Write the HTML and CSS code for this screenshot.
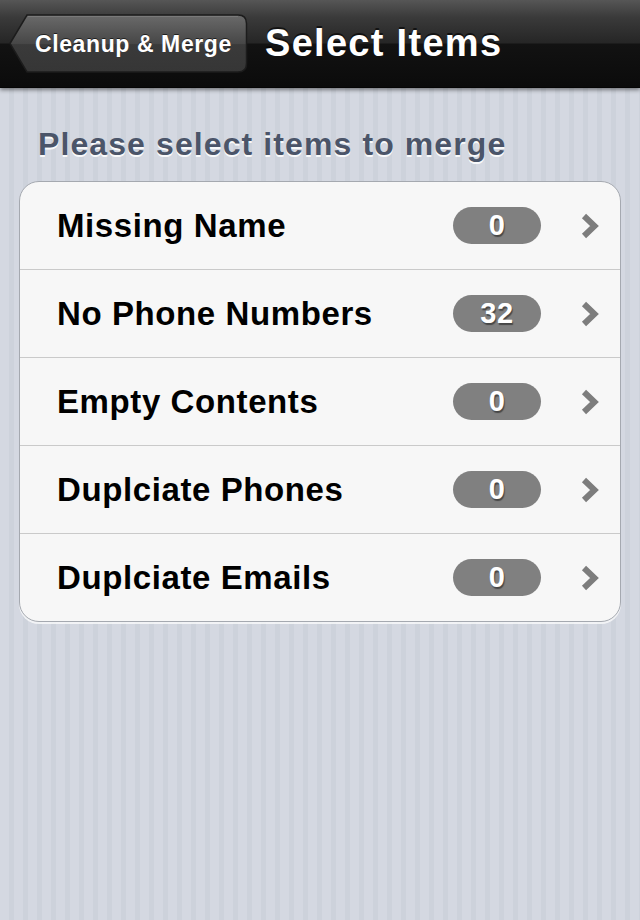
FILE: index.html
```html
<!DOCTYPE html>
<html>
<head>
<meta charset="utf-8">
<link rel="stylesheet" href="styles.css">
</head>
<body>
<div class="screen">
  <header class="navbar">
    <div class="back">
      <svg class="back-bg" width="239" height="60" viewBox="0 0 239 60">
        <defs>
          <linearGradient id="bg" x1="0" y1="0" x2="0" y2="1">
            <stop offset="0" stop-color="#6a6a6a"/>
            <stop offset="0.5" stop-color="#474747"/>
            <stop offset="0.52" stop-color="#3a3a3a"/>
            <stop offset="1" stop-color="#363636"/>
          </linearGradient>
        </defs>
        <path d="M1,29.5 L18,1 H229 Q237.5,1 237.5,9.5 V49.5 Q237.5,58 229,58 H18 Z" fill="url(#bg)" stroke="#1c1c1c" stroke-width="1.5"/>
        <path d="M19,2.5 H229" stroke="#7a7a7a" stroke-width="1" fill="none"/>
      </svg>
      <span class="back-text">Cleanup &amp; Merge</span>
    </div>
    <h1 class="title">Select Items</h1>
  </header>
  <main class="content">
    <h2 class="section-title">Please select items to merge</h2>
    <ul class="table">
      <li class="row"><span class="label">Missing Name</span><span class="badge">0</span><span class="chev"><svg width="18" height="26" viewBox="0 0 18 26"><path d="M3,3 L13.5,13 L3,23" fill="none" stroke="#7d7d7d" stroke-width="6"/></svg></span></li>
      <li class="row"><span class="label">No Phone Numbers</span><span class="badge">32</span><span class="chev"><svg width="18" height="26" viewBox="0 0 18 26"><path d="M3,3 L13.5,13 L3,23" fill="none" stroke="#7d7d7d" stroke-width="6"/></svg></span></li>
      <li class="row"><span class="label">Empty Contents</span><span class="badge">0</span><span class="chev"><svg width="18" height="26" viewBox="0 0 18 26"><path d="M3,3 L13.5,13 L3,23" fill="none" stroke="#7d7d7d" stroke-width="6"/></svg></span></li>
      <li class="row"><span class="label">Duplciate Phones</span><span class="badge">0</span><span class="chev"><svg width="18" height="26" viewBox="0 0 18 26"><path d="M3,3 L13.5,13 L3,23" fill="none" stroke="#7d7d7d" stroke-width="6"/></svg></span></li>
      <li class="row"><span class="label">Duplciate Emails</span><span class="badge">0</span><span class="chev"><svg width="18" height="26" viewBox="0 0 18 26"><path d="M3,3 L13.5,13 L3,23" fill="none" stroke="#7d7d7d" stroke-width="6"/></svg></span></li>
    </ul>
  </main>
</div>
</body>
</html>
```

FILE: styles.css
```css
html, body {
  margin: 0;
  padding: 0;
}
body {
  width: 640px;
  height: 920px;
  overflow: hidden;
  font-family: "Liberation Sans", Arial, sans-serif;
  background: repeating-linear-gradient(90deg, #d4d8e1 0 9px, #cdd2db 9px 14px);
}
.screen {
  display: flex;
  flex-direction: column;
  height: 920px;
}
.navbar {
  position: relative;
  z-index: 1;
  height: 88px;
  box-sizing: border-box;
  display: flex;
  align-items: center;
  padding-left: 9px;
  gap: 17px;
  background: linear-gradient(#565656 0, #3a3a3a 20%, #262626 49%, #121212 51%, #0b0b0b 100%);
  border-bottom: 1px solid #050505;
  box-shadow: 0 2px 4px rgba(0, 0, 0, 0.45);
}
.back {
  position: relative;
  width: 239px;
  height: 60px;
  display: flex;
  align-items: center;
  margin-top: 1px;
}
.back-bg {
  position: absolute;
  left: 0;
  top: 0;
}
.back-text {
  position: relative;
  padding-left: 26px;
  color: #fff;
  font-weight: bold;
  font-size: 23px;
  letter-spacing: 0.6px;
  text-shadow: 0 -1px 0 rgba(0, 0, 0, 0.6);
  white-space: nowrap;
}
.title {
  margin: 0;
  color: #fff;
  font-size: 38px;
  font-weight: bold;
  letter-spacing: 1.3px;
  text-shadow: 0 -2px 0 rgba(0, 0, 0, 0.6);
  white-space: nowrap;
}
.content {
  padding: 0 19px;
}
.section-title {
  margin: 36px 0 0 19px;
  height: 57px;
  font-size: 32px;
  font-weight: bold;
  letter-spacing: 1.1px;
  color: #4b5569;
  text-shadow: 0 2px 0 rgba(255, 255, 255, 0.9);
  white-space: nowrap;
  line-height: 40px;
}
.table {
  list-style: none;
  margin: 0;
  padding: 0;
  background: #f7f7f7;
  border: 1.5px solid #a5a9b0;
  border-radius: 20px;
  box-shadow: 0 2px 0 rgba(255, 255, 255, 0.7);
  overflow: hidden;
}
.row {
  display: flex;
  align-items: center;
  height: 87px;
  border-top: 1px solid #cacaca;
  padding-left: 37px;
  padding-right: 21px;
}
.row:first-child {
  border-top: none;
}
.label {
  flex: 1;
  font-size: 33px;
  font-weight: bold;
  letter-spacing: 0.6px;
  color: #000;
  white-space: nowrap;
}
.badge {
  width: 88px;
  height: 37px;
  border-radius: 19px;
  background: #808080;
  color: #fff;
  font-size: 29px;
  font-weight: bold;
  letter-spacing: 0.5px;
  display: flex;
  align-items: center;
  justify-content: center;
  text-shadow: 1px 2px 1px rgba(0, 0, 0, 0.45);
  margin-right: 40px;
}
.chev {
  display: flex;
  width: 18px;
}
```
